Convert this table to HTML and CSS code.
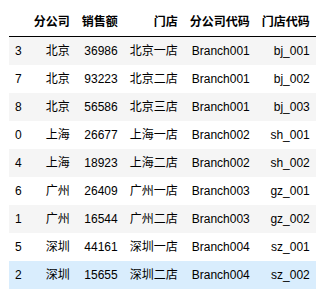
FILE: index.html
```html
<!DOCTYPE html>
<html>
<head>
<meta charset="utf-8">
<link rel="stylesheet" href="styles.css">
</head>
<body>
<table class="df">
  <thead>
    <tr><th class="idx"></th><th>分公司</th><th>销售额</th><th>门店</th><th>分公司代码</th><th>门店代码</th></tr>
  </thead>
  <tbody>
    <tr><th class="idx">3</th><td>北京</td><td>36986</td><td>北京一店</td><td>Branch001</td><td>bj_001</td></tr>
    <tr><th class="idx">7</th><td>北京</td><td>93223</td><td>北京二店</td><td>Branch001</td><td>bj_002</td></tr>
    <tr><th class="idx">8</th><td>北京</td><td>56586</td><td>北京三店</td><td>Branch001</td><td>bj_003</td></tr>
    <tr><th class="idx">0</th><td>上海</td><td>26677</td><td>上海一店</td><td>Branch002</td><td>sh_001</td></tr>
    <tr><th class="idx">4</th><td>上海</td><td>18923</td><td>上海二店</td><td>Branch002</td><td>sh_002</td></tr>
    <tr><th class="idx">6</th><td>广州</td><td>26409</td><td>广州一店</td><td>Branch003</td><td>gz_001</td></tr>
    <tr><th class="idx">1</th><td>广州</td><td>16544</td><td>广州二店</td><td>Branch003</td><td>gz_002</td></tr>
    <tr><th class="idx">5</th><td>深圳</td><td>44161</td><td>深圳一店</td><td>Branch004</td><td>sz_001</td></tr>
    <tr class="hover"><th class="idx">2</th><td>深圳</td><td>15655</td><td>深圳二店</td><td>Branch004</td><td>sz_002</td></tr>
  </tbody>
</table>
</body>
</html>
```
FILE: styles.css
```css
html, body {
  margin: 0;
  background: #ffffff;
}
body {
  padding: 8px 0 0 9px;
  font-family: "Liberation Sans", Arial, "Noto Sans CJK SC", sans-serif;
  font-size: 12px;
  color: #000000;
}
.df {
  border-collapse: collapse;
  border-spacing: 0;
  border: none;
}
.df thead {
  border-bottom: 1px solid #000000;
}
.df th, .df td {
  text-align: right;
  vertical-align: middle;
  padding: 6px 6px;
  line-height: 16px;
  white-space: nowrap;
  border: none;
}
.df thead th {
  font-weight: bold;
}
.df tbody th.idx {
  font-weight: normal;
}
.df tbody tr:nth-child(odd) {
  background: #f5f5f5;
}
.df tbody tr.hover {
  background: #d9edfd;
}
```
